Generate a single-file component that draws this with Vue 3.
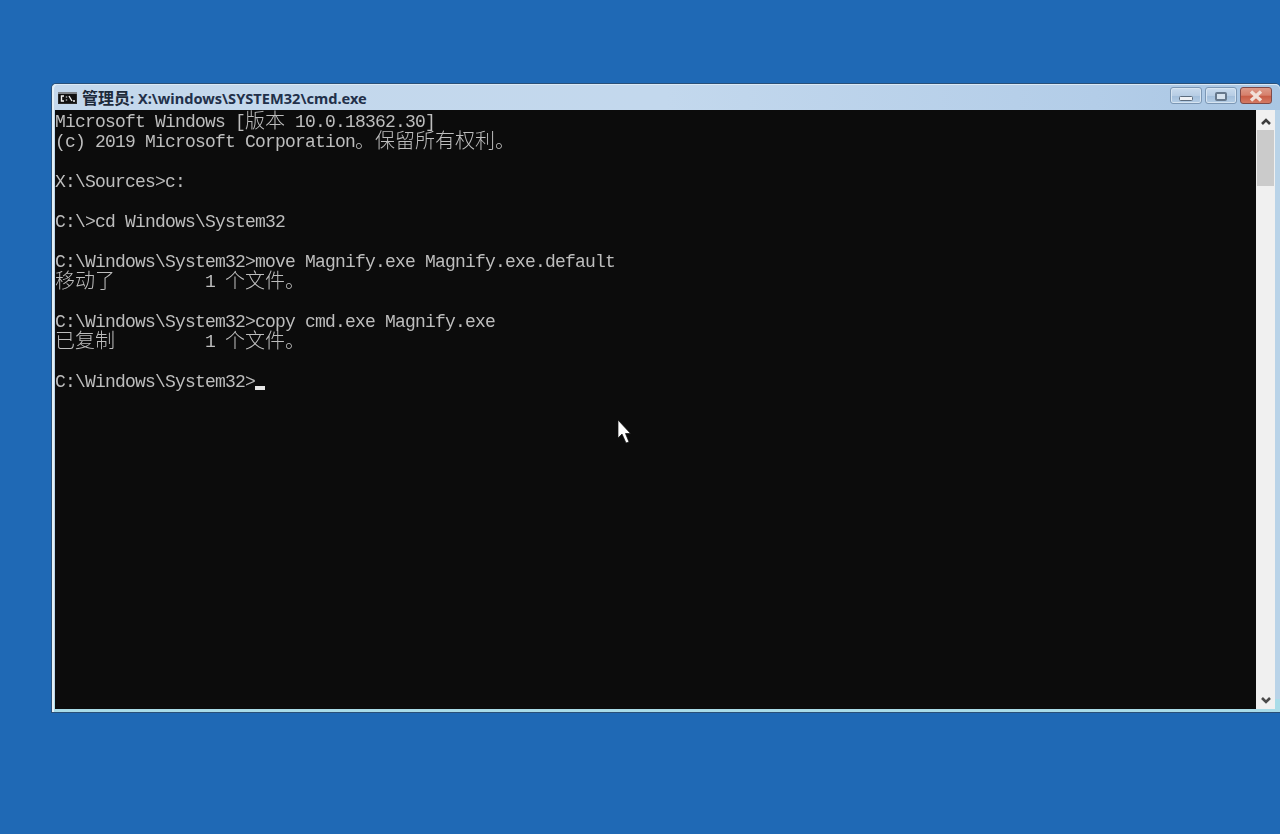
<script setup>
const source = [
  'Microsoft Windows [版本 10.0.18362.30]',
  '(c) 2019 Microsoft Corporation。保留所有权利。',
  '',
  'X:\\Sources>c:',
  '',
  'C:\\>cd Windows\\System32',
  '',
  'C:\\Windows\\System32>move Magnify.exe Magnify.exe.default',
  '移动了         1 个文件。',
  '',
  'C:\\Windows\\System32>copy cmd.exe Magnify.exe',
  '已复制         1 个文件。',
  '',
  'C:\\Windows\\System32>'
]
const lines = source.map((text) =>
  (text.match(/[\u3000-\u9fff]+|[^\u3000-\u9fff]+/g) || []).map((value) => ({
    value,
    cjk: /[\u3000-\u9fff]/.test(value)
  }))
)
</script>

<template>
  <div class="desktop">
    <section class="window">
      <header class="titlebar">
        <svg class="app-icon" viewBox="0 0 19 12" width="19" height="12" aria-hidden="true">
          <rect x="0" y="0" width="19" height="12" fill="#2a2a2a" />
          <rect x="0" y="0" width="19" height="2" fill="#7d8186" />
          <rect x="1" y="2" width="17" height="9" fill="#111" />
          <path d="M6 4H3.500V9H6M8.500 4.500V5.500M8.500 7.500V8.500M11 4L14 9M15 9H17" fill="none" stroke="#f2f2f2" stroke-width="1.400" />
        </svg>
        <h1 class="title"><span class="title-cjk">管理员</span><span class="title-path">: X:\windows\SYSTEM32\cmd.exe</span></h1>
        <div class="controls">
          <div class="control">
            <svg viewBox="0 0 14 5" width="14" height="5" aria-hidden="true">
              <rect x="0.500" y="0.500" width="13" height="4" rx="1" fill="#eef1f5" stroke="#5c6c7e" />
            </svg>
          </div>
          <div class="control">
            <svg viewBox="0 0 12 9" width="12" height="9" aria-hidden="true">
              <rect x="1" y="1" width="10" height="7" rx="1" fill="#d6e2ee" stroke="#66788c" stroke-width="2" />
            </svg>
          </div>
          <div class="control close">
            <svg viewBox="0 0 14 12" width="14" height="12" aria-hidden="true">
              <path d="M2 1.500L12 10.500M12 1.500L2 10.500" fill="none" stroke="#f1e0d8" stroke-width="3.400" />
            </svg>
          </div>
        </div>
      </header>
      <div class="client">
        <main class="console">
          <div v-for="(line, i) in lines" :key="i" class="line"><span
              v-for="(part, j) in line"
              :key="j"
              :class="{ cjk: part.cjk }"
            >{{ part.value }}</span><i v-if="i === lines.length - 1" class="caret"></i></div>
          <svg class="pointer" viewBox="0 0 14 26" width="14" height="26" aria-hidden="true">
            <path d="M1 1V19L5 15L9 24L12 23L8.500 14.500L13.500 14.500Z" fill="#fff" stroke="#111" stroke-width="0.700" />
          </svg>
        </main>
        <aside class="scrollbar">
          <svg class="arrow up" viewBox="0 0 10 7" width="10" height="7" aria-hidden="true">
            <path d="M1 6L5 2L9 6" fill="none" stroke="#3c3c3c" stroke-width="2.600" />
          </svg>
          <div class="thumb"></div>
          <svg class="arrow down" viewBox="0 0 10 7" width="10" height="7" aria-hidden="true">
            <path d="M1 1L5 5L9 1" fill="none" stroke="#4a4a4a" stroke-width="2.600" />
          </svg>
        </aside>
      </div>
    </section>
  </div>
</template>

<style>
html,
body {
  margin: 0;
  background: #1f69b5;
}
</style>

<style scoped>
.desktop {
  box-sizing: border-box;
  width: 1280px;
  height: 834px;
  padding: 83px 0 0 51px;
  background: #1f69b5;
  overflow: hidden;
}

.window {
  box-sizing: border-box;
  display: flex;
  flex-direction: column;
  width: 1229px;
  height: 630px;
  border: 1px solid #2a5078;
  border-right: 0;
  border-radius: 5px 5px 0 0;
  background: linear-gradient(180deg, #b9d3e8 0%, #b9d3e8 98%, #a9dce8 98%);
  padding: 0 5px 3px 3px;
  box-shadow: inset 2px 0 0 #e4f0f6;
}

.titlebar {
  display: flex;
  align-items: center;
  flex: none;
  height: 26px;
  margin: 0 -5px 0 -3px;
  padding: 0 8px 0 6px;
  background: linear-gradient(90deg, #c4d8ec 0%, #c3d8ed 50%, #b3cde8 85%, #a9c6e3 100%);
  border-radius: 5px 5px 0 0;
  box-shadow: inset 0 1px 0 #dce9f4, inset 2px 0 0 #e4f0f6;
}

.app-icon {
  flex: none;
  margin-top: 1px;
}

.title {
  margin: 2px 0 0 5px;
  font: 700 14.600px/20px "Noto Sans", sans-serif;
  color: #1d2a3a;
  white-space: nowrap;
}

.title-cjk {
  font: 700 16px/0 "Noto Sans CJK SC", sans-serif;
}

.title-path {
  color: #22304a;
}

.controls {
  display: flex;
  gap: 3px;
  margin-left: auto;
  margin-top: -4px;
}

.control {
  box-sizing: border-box;
  display: flex;
  align-items: flex-end;
  justify-content: center;
  width: 32px;
  height: 17px;
  padding-bottom: 2px;
  border: 1px solid #7c97b4;
  border-radius: 3px;
  background: linear-gradient(180deg, #c9dbee 0%, #b7cde4 50%, #a4bfdb 55%, #b4cde5 100%);
  box-shadow: inset 0 0 0 1px #d6e4f1;
}

.control.close {
  border-color: #7f4a48;
  padding-bottom: 1px;
  background: linear-gradient(180deg, #dd9a88 0%, #d6806c 48%, #c85c45 55%, #d47a64 100%);
  box-shadow: none;
}

.client {
  display: flex;
  flex: 1;
  min-height: 0;
}

.console {
  position: relative;
  flex: none;
  width: 1201px;
  box-sizing: border-box;
  padding-top: 2px;
  background: #0c0c0c;
  color: #bebebe;
  font: 400 18px/20px "Liberation Mono", monospace;
  letter-spacing: -0.800px;
  white-space: pre;
  filter: blur(0.350px);
}

.line {
  height: 20px;
}

.cjk {
  font: 300 20px/0 "Noto Sans CJK SC", sans-serif;
  letter-spacing: 0;
  vertical-align: -1px;
}

.caret {
  display: inline-block;
  width: 10px;
  height: 4px;
  background: #e6e6e6;
  vertical-align: -3px;
}

.pointer {
  position: absolute;
  left: 562px;
  top: 309px;
}

.scrollbar {
  display: flex;
  flex-direction: column;
  align-items: center;
  flex: 1;
  background: #f0f0f0;
  padding-top: 8px;
}

.arrow {
  flex: none;
}

.thumb {
  align-self: stretch;
  height: 56px;
  margin: 5px 1px 0;
  background: #cbcbcb;
}

.arrow.down {
  margin-top: auto;
  margin-bottom: 5px;
}
</style>
